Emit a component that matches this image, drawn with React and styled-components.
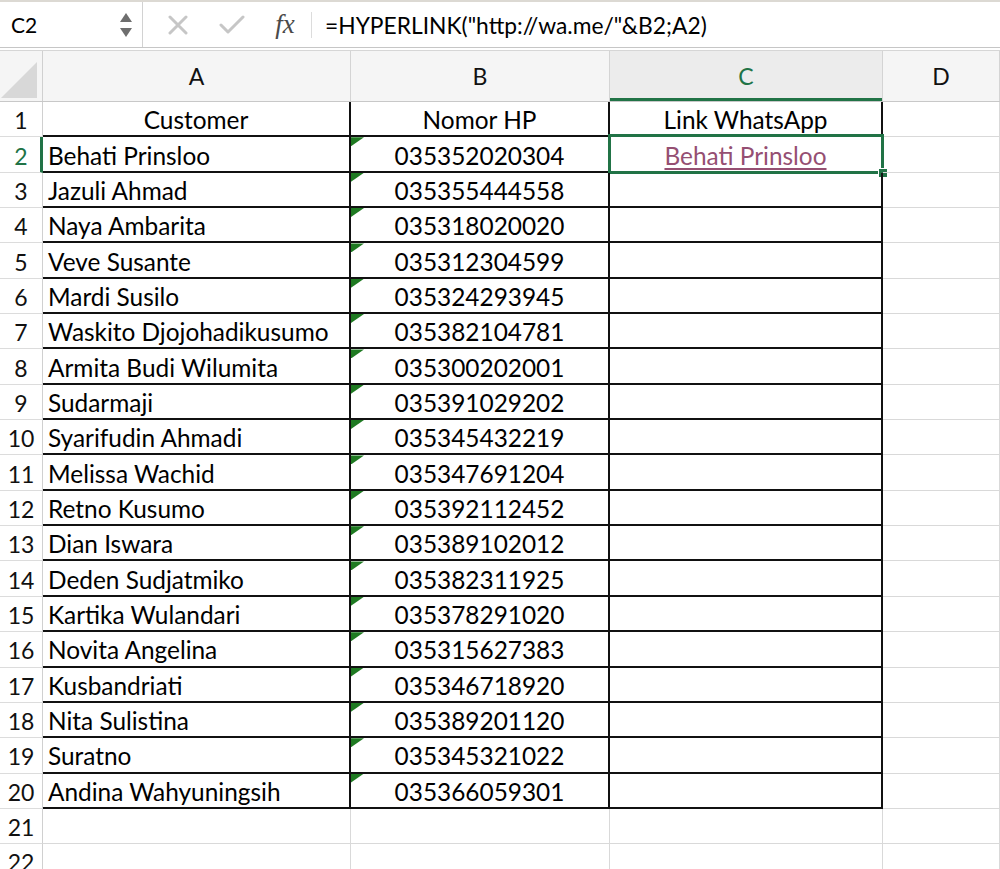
import React from 'react';
import styled, { createGlobalStyle } from 'styled-components';

const GlobalStyle = createGlobalStyle`
  html, body { margin: 0; padding: 0; background: #fff; }
  body {
    font-family: Lato, "Open Sans", sans-serif;
    color: #000;
    overflow: hidden;
  }
`;

const COLS = '43px 308px 259px 273px 1fr';
const GREEN = '#217346';

const Sheet = styled.div`
  width: 1000px;
  height: 869px;
  overflow: hidden;
  display: flex;
  flex-direction: column;
  & > * { flex-shrink: 0; }
`;

const FormulaBar = styled.div`
  height: 48px;
  box-sizing: border-box;
  border-top: 2px solid #dcd9d3;
  border-bottom: 1px solid #c6c6c6;
  display: flex;
  align-items: center;
`;

const NameBox = styled.div`
  width: 143px;
  height: 100%;
  box-sizing: border-box;
  border-right: 1px solid #d2d2d2;
  display: flex;
  align-items: center;
  justify-content: space-between;
  padding: 0 10px 0 11px;
  font-size: 21px;
`;

const Spinner = styled.div`
  display: flex;
  flex-direction: column;
  gap: 6px;
`;

const Tools = styled.div`
  display: flex;
  align-items: center;
  height: 100%;
  padding-left: 8px;
`;

const ToolIcon = styled.div`
  width: 54px;
  display: flex;
  align-items: center;
  justify-content: center;
`;

const Fx = styled.span`
  font-family: "Liberation Serif", "DejaVu Serif", serif;
  font-style: italic;
  font-size: 27px;
  color: #4a4a4a;
  width: 52px;
  text-align: center;
`;

const Formula = styled.div`
  padding-left: 13px;
  border-left: 1px solid #dcdcdc;
  height: 26px;
  display: flex;
  align-items: center;
  font-size: 22.8px;
  white-space: nowrap;
`;

const Gap = styled.div`
  height: 2px;
`;

const HeaderRow = styled.div`
  display: grid;
  grid-template-columns: ${COLS};
  height: 52px;
  box-sizing: border-box;
  border-top: 1px solid #d6d6d6;
  border-bottom: 1px solid #c8c8c8;
  background: #f5f5f5;
`;

const Corner = styled.div`
  border-right: 1px solid #d0d0d0;
  display: flex;
  align-items: flex-end;
  justify-content: flex-end;
  padding: 0 5px 3px 0;
`;

const ColHead = styled.div`
  display: flex;
  align-items: center;
  justify-content: center;
  font-size: 23px;
  border-right: 1px solid #d4d4d4;
  color: ${(p) => (p.$active ? GREEN : '#111')};
  background: ${(p) => (p.$active ? '#ececec' : 'transparent')};
  box-shadow: ${(p) => (p.$active ? `inset 0 -3px 0 ${GREEN}` : 'none')};
`;

const Row = styled.div`
  display: grid;
  grid-template-columns: ${COLS};
  height: 35.35px;
`;

const RowHead = styled.div`
  display: flex;
  align-items: center;
  justify-content: center;
  font-size: 23px;
  box-sizing: border-box;
  padding-top: 2px;
  color: ${(p) => (p.$active ? GREEN : '#111')};
  border-bottom: 1px solid #dcdcdc;
  border-right: ${(p) => (p.$active ? `3px solid ${GREEN}` : '1px solid #d0d0d0')};
  padding-left: ${(p) => (p.$active ? '2px' : '0')};
`;

const Cell = styled.div`
  position: relative;
  box-sizing: border-box;
  display: flex;
  align-items: center;
  justify-content: ${(p) => (p.$center ? 'center' : 'flex-start')};
  padding-left: ${(p) => (p.$center ? '0' : '5px')};
  padding-top: 2px;
  font-size: 24.4px;
  white-space: nowrap;
  border-right: ${(p) => (p.$bordered ? '2px solid #111' : '1px solid #d9d9d9')};
  border-bottom: ${(p) => (p.$bordered ? '2px solid #111' : '1px solid #d9d9d9')};
`;

const ErrorMark = styled.span`
  position: absolute;
  top: 0;
  left: 0;
  width: 13px;
  height: 9px;
  background: #1f7a22;
  clip-path: polygon(0 0, 100% 0, 0 100%);
`;

const Link = styled.a`
  color: #954f72;
  text-decoration: underline;
  text-underline-offset: 3px;
`;

const Selection = styled.div`
  position: absolute;
  top: -3px;
  left: -2px;
  right: -3px;
  bottom: -3px;
  border: 3px solid ${GREEN};
  pointer-events: none;
`;

const Handle = styled.span`
  position: absolute;
  right: -7px;
  bottom: -7px;
  width: 8px;
  height: 8px;
  background: ${GREEN};
  border: 1px solid #fff;
`;

const data = [
  ['Behati Prinsloo', '035352020304'],
  ['Jazuli Ahmad', '035355444558'],
  ['Naya Ambarita', '035318020020'],
  ['Veve Susante', '035312304599'],
  ['Mardi Susilo', '035324293945'],
  ['Waskito Djojohadikusumo', '035382104781'],
  ['Armita Budi Wilumita', '035300202001'],
  ['Sudarmaji', '035391029202'],
  ['Syarifudin Ahmadi', '035345432219'],
  ['Melissa Wachid', '035347691204'],
  ['Retno Kusumo', '035392112452'],
  ['Dian Iswara', '035389102012'],
  ['Deden Sudjatmiko', '035382311925'],
  ['Kartika Wulandari', '035378291020'],
  ['Novita Angelina', '035315627383'],
  ['Kusbandriati', '035346718920'],
  ['Nita Sulistina', '035389201120'],
  ['Suratno', '035345321022'],
  ['Andina Wahyuningsih', '035366059301'],
];

const App = () => {
  return (
    <Sheet>
      <GlobalStyle />
      <FormulaBar>
        <NameBox>
          <span>C2</span>
          <Spinner>
            <svg width="12" height="9" viewBox="0 0 12 9"><path d="M6 0 L12 9 L0 9 Z" fill="#6e6e6e" /></svg>
            <svg width="12" height="9" viewBox="0 0 12 9"><path d="M0 0 L12 0 L6 9 Z" fill="#6e6e6e" /></svg>
          </Spinner>
        </NameBox>
        <Tools>
          <ToolIcon>
            <svg width="20" height="20" viewBox="0 0 20 20">
              <path d="M2 2 L18 18 M18 2 L2 18" stroke="#c6c6c6" strokeWidth="3" strokeLinecap="round" />
            </svg>
          </ToolIcon>
          <ToolIcon>
            <svg width="26" height="20" viewBox="0 0 26 20">
              <path d="M2 10 L9 17 L24 2" stroke="#c6c6c6" strokeWidth="3" fill="none" strokeLinecap="round" strokeLinejoin="round" />
            </svg>
          </ToolIcon>
          <Fx>fx</Fx>
        </Tools>
        <Formula>=HYPERLINK("http://wa.me/"&amp;B2;A2)</Formula>
      </FormulaBar>
      <Gap />
      <HeaderRow>
        <Corner>
          <svg width="36" height="36" viewBox="0 0 36 36"><path d="M36 0 L36 36 L0 36 Z" fill="#d8d8d8" /></svg>
        </Corner>
        <ColHead>A</ColHead>
        <ColHead>B</ColHead>
        <ColHead $active>C</ColHead>
        <ColHead>D</ColHead>
      </HeaderRow>
      <Row>
        <RowHead>1</RowHead>
        <Cell $bordered $center>Customer</Cell>
        <Cell $bordered $center>Nomor HP</Cell>
        <Cell $bordered $center>Link WhatsApp</Cell>
        <Cell />
      </Row>
      {data.map(([name, phone], i) => (
        <Row key={name}>
          <RowHead $active={i === 0}>{i + 2}</RowHead>
          <Cell $bordered>{name}</Cell>
          <Cell $bordered $center>
            <ErrorMark />
            {phone}
          </Cell>
          <Cell $bordered $center>
            {i === 0 && (
              <>
                <Link>Behati Prinsloo</Link>
                <Selection>
                  <Handle />
                </Selection>
              </>
            )}
          </Cell>
          <Cell />
        </Row>
      ))}
      {[21, 22].map((n) => (
        <Row key={n}>
          <RowHead>{n}</RowHead>
          <Cell />
          <Cell />
          <Cell />
          <Cell />
        </Row>
      ))}
    </Sheet>
  );
};

export default App;
